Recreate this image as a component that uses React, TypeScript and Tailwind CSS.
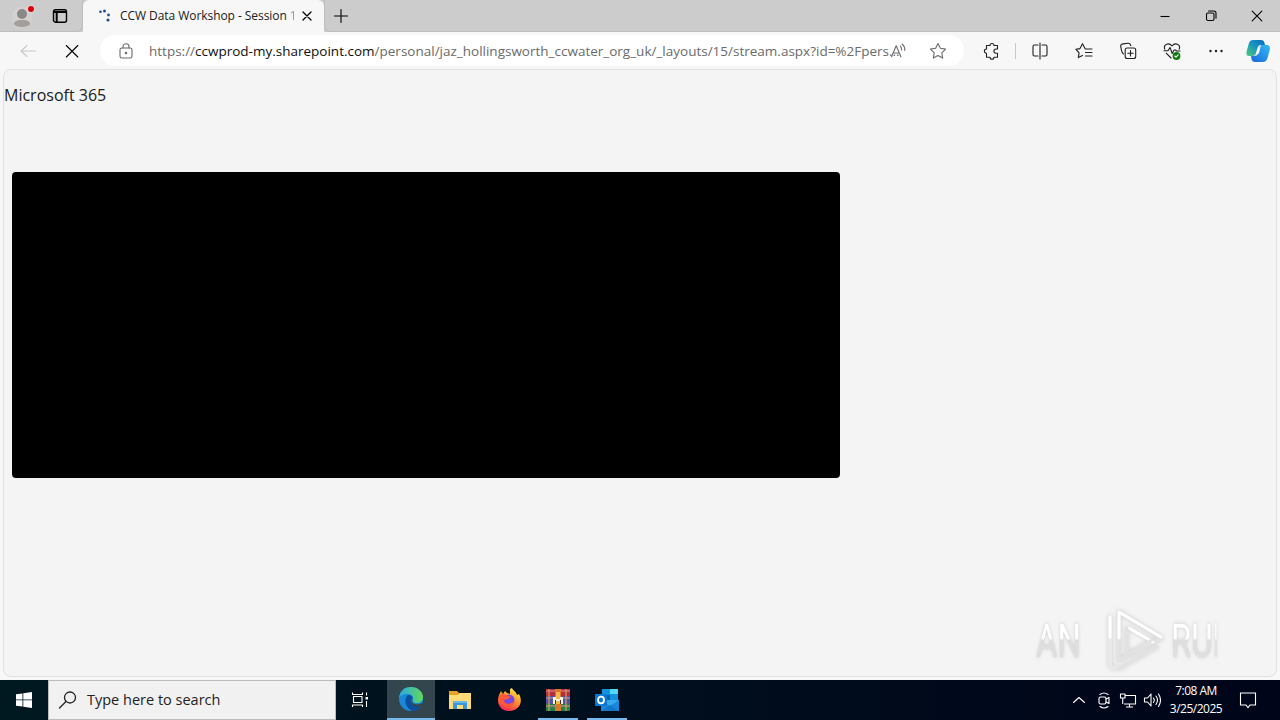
import type { ReactNode } from 'react';

const Icon = ({ className = '', size = 20, children }: { className?: string; size?: number; children: ReactNode }) => (
    <svg
        className={`shrink-0 ${className}`}
        width={size}
        height={size}
        viewBox={`0 0 ${size} ${size}`}
        fill="none"
        stroke="currentColor"
        strokeWidth="1.1"
        strokeLinecap="round"
        strokeLinejoin="round"
    >
        {children}
    </svg>
);

function TitleBar() {
    return (
        <div className="flex h-8 shrink-0 bg-[#cccccc]">
            <div className="flex w-[83px] shrink-0 items-center rounded-br-md border-r border-b border-[#bdbdbd] bg-[#cccccc] pl-3">
                <svg className="shrink-0" width="24" height="26" viewBox="0 0 24 26">
                    <circle cx="10" cy="14" r="10.5" fill="#d4d2d0" />
                    <circle cx="10" cy="11" r="5" fill="#8b8886" />
                    <path d="M2 21c0-3 3-4 8-4s8 1 8 4c-2 4-14 4-16 0Z" fill="#a19e9b" />
                    <circle cx="19" cy="6" r="4" fill="#d9d9d9" />
                    <circle cx="19" cy="6" r="3" fill="#d8000f" />
                </svg>
                <Icon size={16} className="ml-4 text-black">
                    <rect x="1.5" y="1.8" width="13" height="12.4" rx="2" strokeWidth="1.4" />
                    <path d="M2 4h12M4.7 5v8.5" strokeWidth="2" />
                </Icon>
            </div>
            <div className="flex w-[241px] shrink-0 items-center rounded-t-md bg-[#f7f7f7]">
                <svg className="ml-[15px] shrink-0" width="14" height="14" viewBox="0 0 14 14" fill="#1b5390">
                    <circle cx="2.5" cy="2.7" r="1.3" />
                    <circle cx="6.5" cy="2" r="1.5" />
                    <circle cx="10.5" cy="6" r="1.4" />
                    <circle cx="10" cy="11" r="1.6" />
                </svg>
                <div className="ml-2 flex w-[176px] overflow-hidden whitespace-nowrap font-['Open_Sans',sans-serif] text-[12px] leading-5 tracking-[-0.06px] text-[#202020]">
                    <span>CCW Data Workshop - Session&nbsp;</span>
                    <span className="bg-gradient-to-r from-[#777] to-[#ddd] bg-clip-text text-transparent">1-</span>
                </div>
                <Icon size={10} className="ml-[6px] text-black">
                    <path d="m1 1 8 8M9 1 1 9" strokeWidth="1.3" />
                </Icon>
            </div>
            <div className="flex flex-1 items-center rounded-bl-md border-b border-l border-[#bdbdbd] pl-[9px]">
                <Icon size={14} className="text-black">
                    <path d="M7 0.5v13M0.5 7h13" />
                </Icon>
                <div className="ml-auto flex items-center gap-[34px] pr-[17px] text-black">
                    <Icon size={12}>
                        <path d="M1.5 6.5h9" strokeLinecap="butt" />
                    </Icon>
                    <Icon size={12}>
                        <rect x="1.5" y="3" width="7.5" height="7.5" rx="1.5" />
                        <path d="M3.5 1h5.2c1.3 0 2.3 1 2.3 2.3v5" />
                    </Icon>
                    <Icon size={12}>
                        <path d="m1.2 1.2 9.6 9.6M10.8 1.2l-9.6 9.6" />
                    </Icon>
                </div>
            </div>
        </div>
    );
}

function Toolbar() {
    return (
        <div className="flex h-[37px] shrink-0 items-center bg-[#f7f7f7] text-[#202020]">
            <Icon className="ml-[18px] text-[#c8c8c8]">
                <path d="M17.5 10H3M9 4.5 3 10l6 5.5" />
            </Icon>
            <Icon className="ml-6 text-black">
                <path d="m4.3 4.5 11.5 11.5M15.8 4.5 4.3 16" />
            </Icon>
            <div className="ml-[18px] flex h-[31px] w-[864px] shrink-0 items-center rounded-full bg-white text-[#6b6b6b]">
                <Icon size={16} className="ml-[18px]">
                    <rect x="2" y="5" width="12" height="10" rx="1.8" />
                    <path d="M5 5V3.7a3 3 0 0 1 6 0V5" />
                    <circle cx="8" cy="10" r="0.7" fill="currentColor" />
                </Icon>
                <div className="ml-[15px] w-[731px] whitespace-nowrap font-['Open_Sans',sans-serif] text-[13.5px] leading-5">
                    <span>https://</span>
                    <span className="text-[#101010]">ccwprod-my.sharepoint.com</span>
                    <span>/personal/jaz_hollingsworth_ccwater_org_uk/_layouts/15/stream.aspx?id=%2Fpers...</span>
                </div>
                <Icon size={18} className="ml-[10px]">
                    <path d="m1.5 14.8 4.7-11 4.7 11M3.2 11h6M10.5 4.2q1.2 1.5 1 3.8M12.2 2.2q3 2.3 2.5 6.2" />
                </Icon>
                <Icon size={18} className="ml-[21px]">
                    <path d="m9 1.5 2.4 4.8 5.2.8-3.8 3.7.9 5.3L9 13.6l-4.7 2.5.9-5.3-3.8-3.7 5.2-.8Z" />
                </Icon>
            </div>
            <div className="ml-[18px] flex items-center">
                <Icon>
                    <path d="M4.5 4.5H8a2 2 0 0 1 4 0h3.5V8H14a2 2 0 0 0 0 4.2h1.5v4H12a2 2 0 0 1-4 0H4.5v-4a2.1 2.1 0 0 1 0-4.2Z" />
                </Icon>
                <div className="ml-[13px] h-4 w-px bg-[#c8c8c8]" />
                <Icon className="ml-[14px]">
                    <path d="M8 4H4.4C3.5 4 3 4.6 3 5.4v8.2c0 .8.5 1.4 1.4 1.4H8M12 4h3.6c.9 0 1.4.6 1.4 1.4v8.2c0 .8-.5 1.4-1.4 1.4H12M10 2v16" />
                </Icon>
            </div>
            <Icon className="ml-6">
                <path d="M15 8h-3.7L8.5 2.7 6 7.6l-4.1.8 3.2 3.4-.8 4.8 4.2-2.2M11.5 8H18M11.5 11.5H18M11.5 15H18" />
            </Icon>
            <Icon className="ml-6">
                <rect x="7.2" y="7" width="10.5" height="10.5" rx="2" />
                <path d="M5.5 13c-2-1-1.6-2.4-2.7-7C2.4 4 3 3.2 5 2.9l5-.7c2-.2 2.4.7 2.8 2.5M12.5 9.5v5.5M9.8 12.2h5.4" />
            </Icon>
            <Icon className="ml-6">
                <path d="M2.7 8.2C1.2 3.3 6.8 1.1 10 5c3.2-3.9 8.8-1.7 7.3 3.2M2 9.8h4l2-3.3 2.2 6L12 9h1.5l1 1H18M4.2 12.2 9 17" />
                <circle cx="14.5" cy="15" r="3.9" fill="#107c10" stroke="none" />
                <path d="m12.8 15 1.2 1.1 2.2-2.3" stroke="#fff" />
            </Icon>
            <Icon className="ml-6">
                <g fill="currentColor" stroke="none">
                    <circle cx="4.5" cy="10" r="1.2" />
                    <circle cx="10" cy="10" r="1.2" />
                    <circle cx="15.5" cy="10" r="1.2" />
                </g>
            </Icon>
            <svg className="ml-5 shrink-0" width="24" height="24" viewBox="0 0 24 24">
                <defs>
                    <linearGradient id="copA" x1="0" y1="1" x2="1" y2="0">
                        <stop stopColor="#53cb78" />
                        <stop offset=".5" stopColor="#1997bd" />
                        <stop offset="1" stopColor="#0869c9" />
                    </linearGradient>
                    <linearGradient id="copB" x1="0" y1="1" x2="1" y2="0">
                        <stop stopColor="#1769d8" />
                        <stop offset="1" stopColor="#36b9f5" />
                    </linearGradient>
                </defs>
                <path d="M7 1h8c2 0 3 1 3.5 3l.5 2h-4c-2 0-3 1-3.5 3l-1.5 5c-.5 2-1.5 3-3.5 3H3c-3 0-3-3-2-6l2-7c.7-2 2-3 4-3Z" fill="url(#copA)" />
                <path d="M17 23H9c-2 0-3-1-3.5-3L5 17h3c2 0 3-1 3.5-3L13 9c.5-2 1.5-3 3.5-3H21c3 0 3.500 3 2.500 6l-2 7c-.8 2.500-2 4-4.500 4Z" fill="url(#copB)" />
                <path d="m12 10 3-4-2 8-3 3Z" fill="#f7f7f7" />
            </svg>
        </div>
    );
}

function Watermark() {
    return (
        <div className="absolute right-[40px] bottom-[3px] flex h-[66px] w-[200px] items-center justify-between font-['Roboto',sans-serif] text-[47px] leading-none">
            <span className="w-[65px] origin-left scale-x-[0.7] bg-gradient-to-b from-white from-45% to-[#dedede] to-50% bg-clip-text text-transparent drop-shadow-[0_0_2px_#c8c8c8]">ANY</span>
            <svg className="absolute left-[70px] drop-shadow-[0_0_2px_#cccccc]" width="60" height="66" viewBox="0 0 60 66" fill="none" strokeWidth="4" strokeLinejoin="round" strokeLinecap="round">
                <path d="M4 10v46c0 4 3 6 6 4" stroke="#e8e8e8" />
                <path d="M13 5v48l42-22Z" stroke="#e2e2e2" />
                <path d="M4 30V10M13 31V5l42 25M21 20l26 15" stroke="#fff" strokeWidth="3" />
                <path d="M21 20v27l25-14M13 62l38-22" stroke="#e2e2e2" strokeWidth="3" />
            </svg>
            <span className="ml-[65px] w-[65px] origin-left scale-x-[0.7] bg-gradient-to-b from-white from-45% to-[#dedede] to-50% bg-clip-text text-transparent drop-shadow-[0_0_2px_#c8c8c8]">RUN</span>
        </div>
    );
}

function Taskbar() {
    return (
        <div className="flex h-10 shrink-0 bg-gradient-to-r from-[#001820] to-[#000519] text-white">
            <div className="flex w-12 shrink-0 items-center justify-center">
                <svg width="16" height="16" viewBox="0 0 16 16" fill="white">
                    <path d="M0 2.300 6.500 1.400v6H0ZM7.300 1.300 16 0v7.400H7.300ZM0 8.300h6.500v6.300L0 13.700ZM7.300 8.300H16V16l-8.700-1.300Z" />
                </svg>
            </div>
            <div className="flex w-72 shrink-0 items-center border border-[#bcbcbc] bg-[#f1f1f1] text-[#222]">
                <Icon className="ml-[9px]">
                    <circle cx="12" cy="7.500" r="5.500" strokeWidth="1.300" />
                    <path d="m8 11.500-6.500 6.500" strokeWidth="1.300" />
                </Icon>
                <span className="ml-[9px] whitespace-nowrap font-['Open_Sans',sans-serif] text-[14.5px] leading-5">Type here to search</span>
            </div>
            <div className="flex w-[51px] shrink-0 items-center pl-[15px]">
                <Icon size={18}>
                    <path d="M1.500 1.500v2h10v-2M1.500 16v-2h10v2M2.500 5.500h8.500v6H2.500ZM15.500 1.500v3M15.500 10v6" strokeLinecap="butt" />
                    <path d="M14.500 6h2.500v2.500h-2.500Z" fill="currentColor" stroke="none" />
                </Icon>
            </div>
            <div className="flex w-12 shrink-0 items-center justify-center border-b-2 border-[#76b9ed] bg-[#33464d]">
                <svg width="24" height="24" viewBox="0 0 24 24">
                    <defs>
                        <linearGradient id="edgeTop">
                            <stop stopColor="#28a8e8" />
                            <stop offset="1" stopColor="#62d957" />
                        </linearGradient>
                    </defs>
                    <circle cx="12" cy="12" r="12" fill="#1689d8" />
                    <path d="M0 11C1 3 6 0 12 0c7 0 12 5 12 10 0 4-3 6-6 6-3 0-5-1-4-3 1-4-2-6-6-6-4 0-7 2-8 4Z" fill="url(#edgeTop)" />
                    <path d="M8 9c-3 4-2 11 5 15 4 0 7-2 9-5-5 2-10-1-10-5 0-2 1-3 2-3-2-3-4-4-6-2Z" fill="#0d4f9c" />
                    <path d="M13.500 12c-2 5 4 7 9 4l1 1-1 2c-6 3-11-1-10-6Z" fill="#33464d" />
                </svg>
            </div>
            <div className="flex w-[50px] shrink-0 items-center justify-center">
                <svg width="22" height="20" viewBox="0 0 22 20">
                    <path d="M0 1h8l2 2h11v15H0Z" fill="#e5a326" />
                    <path d="M0 5h9l2-2h11v16H0Z" fill="#ffdc75" />
                    <path d="M4 19v-7q0-1 1-1h12q1 0 1 1v7h-4v-4H8v4Z" fill="#3b96db" />
                    <path d="M4 11h14v2H4Z" fill="#68b8ed" />
                </svg>
            </div>
            <div className="flex w-12 shrink-0 items-center justify-center">
                <svg width="24" height="24" viewBox="0 0 24 24">
                    <defs>
                        <linearGradient id="fox" x1=".8" y1="0" x2=".3" y2="1">
                            <stop stopColor="#fff13f" />
                            <stop offset=".45" stopColor="#ff9827" />
                            <stop offset="1" stopColor="#ff2458" />
                        </linearGradient>
                    </defs>
                    <path d="M3 5 4 3l2 3 2-3 2 2 3 1V1l2-1c1 3 4 3 5 7l2-1c5 9-1 17-10 17C3 23-2 14 3 5Z" fill="url(#fox)" />
                    <circle cx="12" cy="12" r="5.500" fill="#7649e5" />
                    <path d="M2 8c3-3 6-2 9 0l3 1-3 2-4 1c0 4 5 5 9 2 0 4-3 6-7 5-4-1-7-6-7-11Z" fill="#ff5937" />
                </svg>
            </div>
            <div className="flex w-[50px] shrink-0 flex-col items-center justify-end">
                <svg className="mb-[6px]" width="24" height="24" viewBox="0 0 24 24">
                    <path d="M0 1h24v7H0Z" fill="#b52b43" />
                    <path d="M0 8h24v8H0Z" fill="#4b55a6" />
                    <path d="M0 16h24v7H0Z" fill="#24804c" />
                    <path d="M0 3h24M0 10h24M0 18h24" stroke="#e8909c" strokeWidth="1" />
                    <path d="M3 1v22M20 1v22" stroke="#d9a441" strokeWidth="1.200" />
                    <path d="M9 1h6v22H9Z" fill="#d97827" />
                    <path d="M7 9h10v7H7Z" fill="#f8f3df" />
                    <path d="M10 4h4v7h-4ZM10 13h4v3h-4Z" fill="#f4ba45" />
                    <path d="M9 16v-4h1v4M14 16v-4h1v4" fill="#41302e" />
                </svg>
                <div className="h-[2px] w-10 bg-[#76b9ed]" />
            </div>
            <div className="flex w-12 shrink-0 flex-col items-center justify-end">
                <svg className="mb-[6px]" width="24" height="24" viewBox="0 0 24 24">
                    <path d="M7 1h16v11H7Z" fill="#1490df" />
                    <path d="M15 1h8v5h-8Z" fill="#50d9ff" />
                    <path d="M7 7h8v5H7Z" fill="#0f5eaa" />
                    <path d="M6 12h18v11H6Z" fill="#38a9ed" />
                    <path d="m6 12 9 6 9-6v11H6Z" fill="#1689dc" />
                    <path d="m6 23 9-6 9 6Z" fill="#1675c7" />
                    <rect y="6" width="12" height="12" rx="1" fill="#0878d4" />
                    <ellipse cx="6" cy="12" rx="3" ry="3.300" fill="none" stroke="white" strokeWidth="1.800" />
                </svg>
                <div className="h-[2px] w-10 bg-[#76b9ed]" />
            </div>
            <div className="ml-auto flex items-center pr-[23px]">
                <Icon size={14}>
                    <path d="m1.500 9.500 5.500-5 5.500 5" />
                </Icon>
                <Icon size={18} className="ml-[9px]">
                    <rect x="4" y="6" width="7" height="7" rx="1.500" />
                    <path d="m11 8 3-1.500v6L11 11M5 3.500q4-3 8 0M5 15.500q4 3 8 0" />
                </Icon>
                <Icon size={18} className="ml-[6px]">
                    <path d="M6 4.500h10.500v8.500H5M10.500 13v3M7 16h7M1.500 3H6v4H1.500ZM3.700 7v6" strokeLinecap="butt" />
                </Icon>
                <Icon size={18} className="ml-[6px]">
                    <path d="M1.500 7h3l3.500-4v12l-3.500-4h-3ZM10.500 7q1.500 2 0 4.500M13 5q3 4 0 8.500M15.500 3q4 6 0 12.500" />
                </Icon>
                <div className="ml-[8px] w-[54px] text-center font-['Open_Sans',sans-serif] text-[12px] leading-[18px] tracking-[-0.5px] whitespace-nowrap">
                    <div>7:08 AM</div>
                    <div>3/25/2025</div>
                </div>
                <Icon size={18} className="ml-[16px]">
                    <path d="M1.500 2h15v12H11l-2 2.500L7 14H1.500Z" strokeLinejoin="miter" />
                </Icon>
            </div>
        </div>
    );
}

export default function App() {
    return (
        <div className="flex h-[720px] w-[1280px] flex-col overflow-hidden bg-[#f7f7f7]">
            <TitleBar />
            <Toolbar />
            <main className="relative mx-[3px] mb-[3px] flex-1 rounded-lg border border-[#e2e2e2] bg-[#f4f4f4]">
                <h1 className="mt-[13px] font-['Open_Sans',sans-serif] text-[16px] leading-6 font-medium text-[#202020]">Microsoft 365</h1>
                <div className="mt-[65px] ml-2 h-[306px] w-[828px] rounded-[4px] bg-black" />
                <Watermark />
            </main>
            <Taskbar />
        </div>
    );
}
